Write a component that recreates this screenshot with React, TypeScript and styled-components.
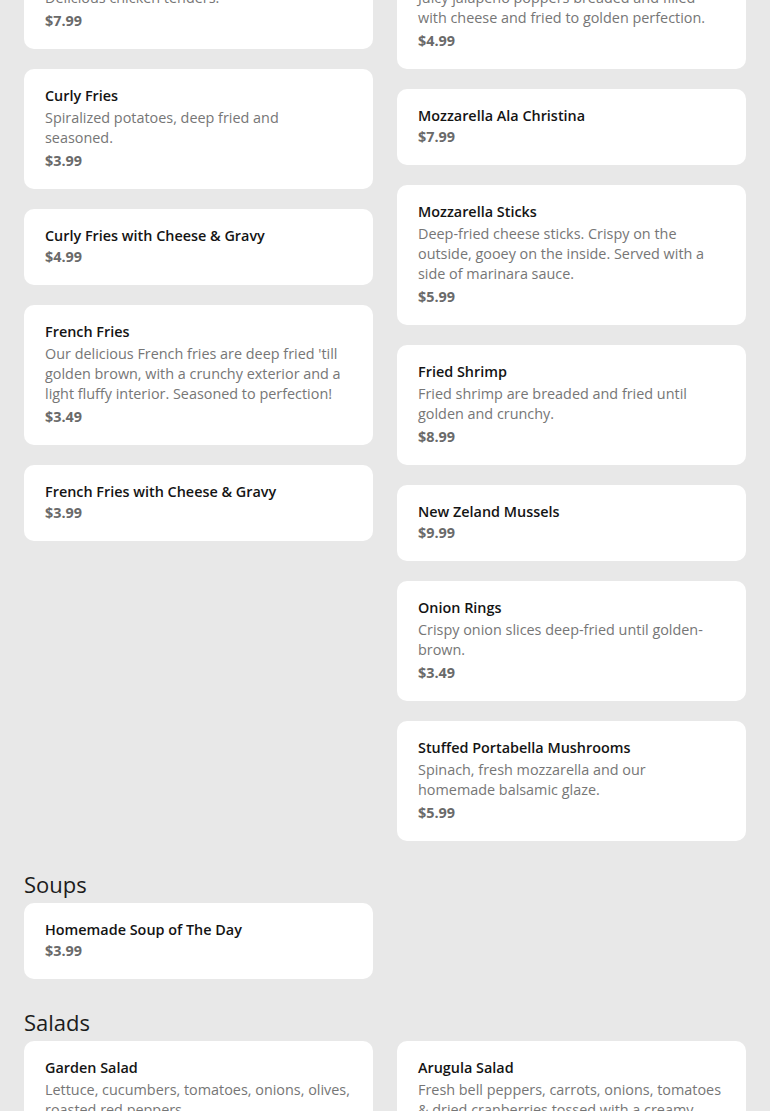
import React from 'react';
import styled, { createGlobalStyle } from 'styled-components';

interface MenuItem {
    name: string;
    description?: string;
    price: string;
}

interface MenuSection {
    title?: string;
    left: MenuItem[];
    right: MenuItem[];
}

const GlobalStyle = createGlobalStyle`
    html, body {
        margin: 0;
        padding: 0;
        overflow: hidden;
        background: #e8e8e8;
    }
    body {
        font-family: "Open Sans", "Noto Sans", sans-serif;
        -webkit-font-smoothing: antialiased;
    }
`;

const Page = styled.main`
    padding: 0 24px 40px;
    margin-top: -51px;
    display: flex;
    flex-direction: column;
    gap: 28px;
`;

const Section = styled.section`
    display: flex;
    flex-direction: column;
`;

const SectionTitle = styled.h2`
    margin: 0 0 4px;
    font-size: 22px;
    line-height: 30px;
    font-weight: 400;
    color: #1c1c1c;
`;

const Columns = styled.div`
    display: grid;
    grid-template-columns: 1fr 1fr;
    gap: 24px;
    align-items: start;
`;

const Column = styled.div`
    display: flex;
    flex-direction: column;
    gap: 20px;
`;

const Card = styled.article`
    background: #ffffff;
    border-radius: 10px;
    padding: 16px 23px 18px 21px;
    display: flex;
    flex-direction: column;
`;

const ItemName = styled.h3`
    margin: 0;
    font-size: 0.9rem;
    line-height: 21px;
    font-weight: 600;
    color: #141414;
`;

const ItemDescription = styled.p`
    margin: 2px 0 0;
    font-size: 0.9rem;
    line-height: 20px;
    color: #767676;
`;

const ItemPrice = styled.span<{ $afterText: boolean }>`
    margin-top: ${p => (p.$afterText ? '2px' : '0')};
    font-size: 0.9rem;
    line-height: 21px;
    font-weight: 700;
    color: #6a6a6a;
`;

const sections: MenuSection[] = [
    {
        left: [
            { name: 'Chicken Tenders', description: 'Delicious chicken tenders.', price: '$7.99' },
            { name: 'Curly Fries', description: 'Spiralized potatoes, deep fried and seasoned.', price: '$3.99' },
            { name: 'Curly Fries with Cheese & Gravy', price: '$4.99' },
            {
                name: 'French Fries',
                description: "Our delicious French fries are deep fried 'till golden brown, with a crunchy exterior and a light fluffy interior. Seasoned to perfection!",
                price: '$3.49',
            },
            { name: 'French Fries with Cheese & Gravy', price: '$3.99' },
        ],
        right: [
            {
                name: 'Jalapeño Poppers',
                description: 'Juicy jalapeño poppers breaded and filled with cheese and fried to golden perfection.',
                price: '$4.99',
            },
            { name: 'Mozzarella Ala Christina', price: '$7.99' },
            {
                name: 'Mozzarella Sticks',
                description: 'Deep-fried cheese sticks. Crispy on the outside, gooey on the inside. Served with a side of marinara sauce.',
                price: '$5.99',
            },
            { name: 'Fried Shrimp', description: 'Fried shrimp are breaded and fried until golden and crunchy.', price: '$8.99' },
            { name: 'New Zeland Mussels', price: '$9.99' },
            { name: 'Onion Rings', description: 'Crispy onion slices deep-fried until golden-brown.', price: '$3.49' },
            {
                name: 'Stuffed Portabella Mushrooms',
                description: 'Spinach, fresh mozzarella and our homemade balsamic glaze.',
                price: '$5.99',
            },
        ],
    },
    {
        title: 'Soups',
        left: [{ name: 'Homemade Soup of The Day', price: '$3.99' }],
        right: [],
    },
    {
        title: 'Salads',
        left: [
            {
                name: 'Garden Salad',
                description: 'Lettuce, cucumbers, tomatoes, onions, olives, roasted red peppers.',
                price: '$6.99',
            },
        ],
        right: [
            {
                name: 'Arugula Salad',
                description: 'Fresh bell peppers, carrots, onions, tomatoes & dried cranberries tossed with a creamy balsamic dressing.',
                price: '$8.99',
            },
        ],
    },
];

function ItemCard({ item }: { item: MenuItem }) {
    return (
        <Card>
            <ItemName>{item.name}</ItemName>
            {item.description && <ItemDescription>{item.description}</ItemDescription>}
            <ItemPrice $afterText={!!item.description}>{item.price}</ItemPrice>
        </Card>
    );
}

export default function App() {
    return (
        <>
            <GlobalStyle />
            <Page>
                {sections.map((section, index) => (
                    <Section key={index}>
                        {section.title && <SectionTitle>{section.title}</SectionTitle>}
                        <Columns>
                            <Column>
                                {section.left.map(item => (
                                    <ItemCard key={item.name} item={item} />
                                ))}
                            </Column>
                            <Column>
                                {section.right.map(item => (
                                    <ItemCard key={item.name} item={item} />
                                ))}
                            </Column>
                        </Columns>
                    </Section>
                ))}
            </Page>
        </>
    );
}
